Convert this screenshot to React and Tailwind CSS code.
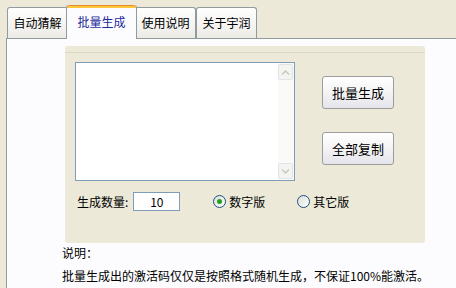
import React from "react";

const tabs = ["自动猜解", "批量生成", "使用说明", "关于宇润"];

function Tab({ label, active }) {
    if (active) {
        return (
            <div className="relative z-10 -mx-[2px] -mb-px flex h-[34px] w-[71px] flex-col rounded-t-[3px] border-x border-[#919B9C] bg-[#FCFCFE]">
                <div className="h-[3px] rounded-t-[3px] bg-[#FFC83C] border-t border-[#E68B2C]"></div>
                <div className="flex flex-1 items-center justify-center pb-[3px] text-[#1C2C9C]">
                    {label}
                </div>
            </div>
        );
    }
    return (
        <div className="flex h-[31px] w-[61px] items-center justify-center rounded-t-[3px] border border-b-0 border-[#919B9C] bg-gradient-to-b from-white to-[#ECEBE6] text-black">
            {label}
        </div>
    );
}

function XpButton({ children }) {
    return (
        <button className="h-[33px] w-[72px] rounded-[3px] border border-[#9C9C9C] bg-gradient-to-b from-white via-[#F4F4F4] to-[#E4E4EC] text-[13px] text-black">
            {children}
        </button>
    );
}

function Radio({ checked, label }) {
    return (
        <div className="flex items-center">
            <span className="flex h-[13px] w-[13px] items-center justify-center rounded-full border border-[#1C5180] bg-gradient-to-br from-[#DCDCD7] to-white">
                {checked && <span className="h-[5px] w-[5px] rounded-full bg-[#21A121]"></span>}
            </span>
            <span className="ml-[3px]">{label}</span>
        </div>
    );
}

function ScrollArrow({ up }) {
    return (
        <div className="flex h-[16px] w-[15px] items-center justify-center rounded-[2px] border border-[#E0E3EA] bg-[#F4F4F0]">
            <svg width="9" height="5" viewBox="0 0 9 5">
                <path
                    d={up ? "M1 4.5 L4.5 1 L8 4.5" : "M1 0.5 L4.5 4 L8 0.5"}
                    fill="none"
                    stroke="#C9C9C4"
                    strokeWidth="1.5"
                />
            </svg>
        </div>
    );
}

export default function App() {
    return (
        <div
            className="flex h-[288px] w-[456px] flex-col overflow-hidden bg-[#ECE9D8] text-[12px] leading-[14px] text-black"
            style={{ fontFamily: '"Noto Sans CJK SC", "Liberation Sans", sans-serif' }}
        >
            {/* tab strip */}
            <div className="flex h-[38px] items-end pl-[7px]">
                {tabs.map((t, i) => (
                    <Tab key={t} label={t} active={i === 1} />
                ))}
            </div>

            {/* page */}
            <div className="ml-[6px] flex-1 border-l border-t border-[#919B9C] bg-[#FCFCFE]">
                {/* group panel */}
                <div className="ml-[58px] mt-[7px] h-[197px] w-[360px] rounded-[3px] bg-[#ECE9D8] pt-[6px]">
                    <div className="h-full border-t border-[#DDD8C6]">
                        <div className="flex pt-[9px]">
                            {/* textarea */}
                            <div className="ml-[10px] flex h-[119px] w-[220px] border border-[#7F9DB9] bg-white">
                                <div className="flex-1"></div>
                                <div className="flex w-[16px] flex-col justify-between bg-[#FAFAF8] py-px">
                                    <ScrollArrow up />
                                    <ScrollArrow />
                                </div>
                            </div>
                            <div className="ml-[27px] mt-[14px] flex flex-col gap-[23px]">
                                <XpButton>批量生成</XpButton>
                                <XpButton>全部复制</XpButton>
                            </div>
                        </div>

                        <div className="mt-[11px] flex h-[19px] items-center">
                            <span className="ml-[12px]">生成数量:</span>
                            <div className="ml-[5px] flex h-[19px] w-[47px] items-center justify-center border border-[#7F9DB9] bg-white">
                                10
                            </div>
                            <div className="ml-[33px]">
                                <Radio checked label="数字版" />
                            </div>
                            <div className="ml-[32px]">
                                <Radio label="其它版" />
                            </div>
                        </div>
                    </div>
                </div>

                <div className="ml-[55px] mt-[3px]">说明：</div>
                <div className="ml-[55px] mt-[9px]">
                    批量生成出的激活码仅仅是按照格式随机生成，不保证100%能激活。
                </div>
            </div>
        </div>
    );
}
